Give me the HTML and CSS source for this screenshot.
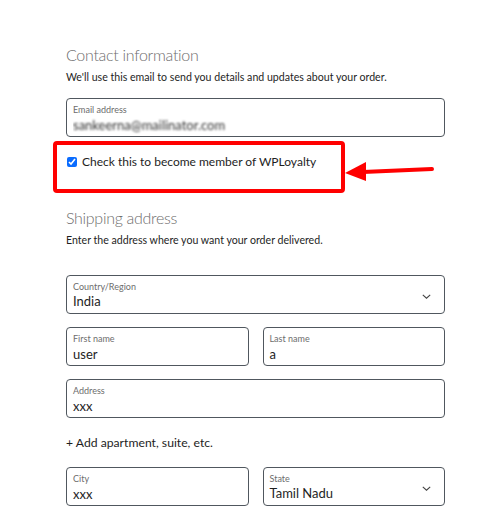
FILE: index.html
```html
<!DOCTYPE html>
<html lang="en">
<head>
    <meta charset="UTF-8">
    <title>Checkout</title>
    <link rel="stylesheet" href="styles.css">
</head>
<body>
    <div class="checkout">
        <section class="block">
            <h2>Contact information</h2>
            <p class="hint">We'll use this email to send you details and updates about your order.</p>
            <div class="field">
                <span class="label">Email address</span>
                <span class="value blurred">sankeerna@mailinator.com</span>
            </div>
            <div class="highlight">
                <label class="member">
                    <input type="checkbox" checked>
                    <span>Check this to become member of WPLoyalty</span>
                </label>
                <svg class="arrow" width="92" height="24" viewBox="0 0 92 24">
                    <path d="M18 13 L87 10" stroke="#ff0000" stroke-width="4" stroke-linecap="round" fill="none"/>
                    <polygon points="0,14 21,3 21,22" fill="#ff0000"/>
                </svg>
            </div>
        </section>

        <section class="block">
            <h2>Shipping address</h2>
            <p class="hint">Enter the address where you want your order delivered.</p>
            <div class="form">
                <div class="field select full">
                    <span class="label">Country/Region</span>
                    <span class="value">India</span>
                    <svg class="chev" width="9" height="5" viewBox="0 0 9 5"><path d="M0.8 0.8 L4.5 4.2 L8.2 0.8" stroke="#444" stroke-width="1.1" fill="none"/></svg>
                </div>
                <div class="field">
                    <span class="label">First name</span>
                    <span class="value">user</span>
                </div>
                <div class="field">
                    <span class="label">Last name</span>
                    <span class="value">a</span>
                </div>
                <div class="field full">
                    <span class="label">Address</span>
                    <span class="value">xxx</span>
                </div>
                <a class="add-line full" href="#">+ Add apartment, suite, etc.</a>
                <div class="field">
                    <span class="label">City</span>
                    <span class="value">xxx</span>
                </div>
                <div class="field select">
                    <span class="label">State</span>
                    <span class="value">Tamil Nadu</span>
                    <svg class="chev" width="9" height="5" viewBox="0 0 9 5"><path d="M0.8 0.8 L4.5 4.2 L8.2 0.8" stroke="#444" stroke-width="1.1" fill="none"/></svg>
                </div>
            </div>
        </section>
    </div>
</body>
</html>
```

FILE: styles.css
```css
* {
    box-sizing: border-box;
    margin: 0;
    padding: 0;
}

body {
    background: #fff;
    font-family: "Lato", "Open Sans", sans-serif;
    color: #1e1e1e;
}

.checkout {
    width: 379px;
    margin-left: 66px;
    padding-top: 44px;
}

.block h2 {
    font-size: 16px;
    letter-spacing: -0.3px;
    font-weight: 300;
    color: #6d6d6d;
    line-height: 22px;
    margin-bottom: 3px;
}

.hint {
    font-size: 10.6px;
    line-height: 16px;
    color: #1e1e1e;
    margin-bottom: 13px;
}

.field {
    position: relative;
    height: 39px;
    border: 1px solid #50575e;
    border-radius: 4px;
    padding: 5px 6px 0;
    display: flex;
    flex-direction: column;
}

.label {
    font-size: 9px;
    line-height: 12px;
    color: #6d6d6d;
}

.value {
    font-size: 13px;
    line-height: 18px;
    color: #1e1e1e;
}

.blurred {
    color: #333;
    filter: blur(1.3px);
    -webkit-mask-image: linear-gradient(90deg, #000 80%, transparent);
}

.highlight {
    position: relative;
    width: 292px;
    height: 52px;
    margin: 4px 0 14px -13px;
    border: 4px solid #ff0000;
    border-radius: 4px;
    padding: 9px 10px;
}

.member {
    display: flex;
    align-items: center;
    gap: 5px;
    font-size: 12px;
    color: #1e1e1e;
}

.member input {
    width: 10px;
    height: 10px;
    accent-color: #0a6cff;
}

.arrow {
    position: absolute;
    left: 288px;
    top: 14px;
}

.form {
    margin-top: 27px;
    display: grid;
    grid-template-columns: 1fr 1fr;
    column-gap: 14px;
    row-gap: 13px;
}

.full {
    grid-column: 1 / -1;
}

.select .value {
    margin-top: -1px;
}

.chev {
    position: absolute;
    right: 13px;
    top: 18px;
}

.add-line {
    font-size: 12.2px;
    color: #1e1e1e;
    text-decoration: none;
    line-height: 18px;
    margin: 3px 0 2px;
}
```
